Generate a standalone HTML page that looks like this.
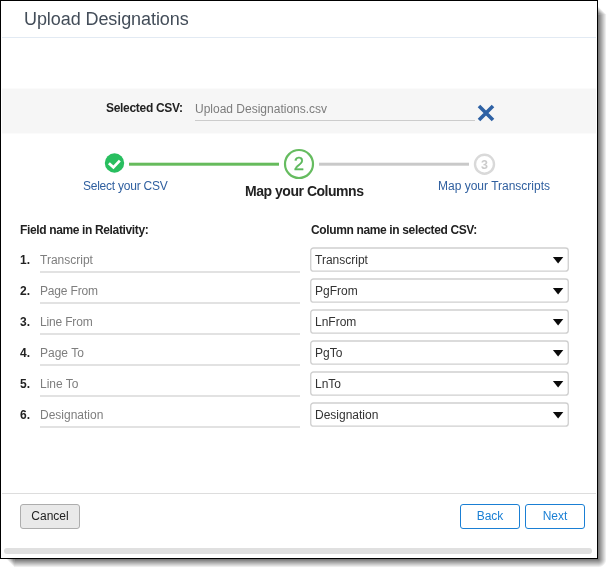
<!DOCTYPE html>
<html><head><meta charset="utf-8">
<style>
html,body{margin:0;padding:0;background:#fff;}
body{width:613px;height:574px;position:relative;overflow:hidden;font-family:"Liberation Sans",sans-serif;font-size:12px;color:#222;}
.abs{position:absolute;white-space:nowrap;}
#wrap{position:absolute;left:0;top:0;width:613px;height:574px;will-change:transform;}
#win{position:absolute;left:0;top:0;width:596px;height:557px;border:1px solid #000;background:#fff;box-sizing:content-box;}
#title{left:24px;top:8px;font-size:18px;line-height:22px;color:#434d59;letter-spacing:-0.08px;}
#hline{left:2px;top:37px;width:594px;height:1px;background:#e2eaf3;}
#band{left:2px;top:88px;width:594px;height:46px;background:linear-gradient(to bottom,#fbfbfb 0,#fbfbfb 1px,#f6f6f6 1px,#f6f6f6 45px,#fbfbfb 45px,#fbfbfb 46px);}
#sel{left:106px;top:101px;font-weight:bold;font-size:12px;line-height:14px;color:#222;letter-spacing:-0.3px;}
#fname{left:195px;top:102px;font-size:12px;line-height:14px;color:#7c7c7c;}
#funder{left:195px;top:120px;width:280px;height:1px;background:#ccc;}
.lbl{font-size:12px;line-height:14px;color:#2f5f9f;}
.hd{font-weight:bold;font-size:12px;line-height:14px;color:#222;}
.num{left:20px;font-weight:bold;font-size:12px;line-height:14px;color:#222;}
.fld{left:40px;font-size:12px;line-height:14px;color:#7e7e7e;}
.ul{left:40px;width:260px;height:2px;background:#e2e2e2;}
.sel{left:308px;width:264px;height:28px;}
.sel svg{position:absolute;left:0;top:0;}
.sel span{position:absolute;left:7px;top:7px;font-size:12px;line-height:14px;color:#333;}
.btn{top:504px;height:23px;border-radius:3px;font-size:12px;line-height:23px;text-align:center;}
</style></head><body>
<div id="wrap">
<div id="win"></div>
<svg class="abs" style="left:0;top:0" width="613" height="574" viewBox="0 0 613 574">
<defs>
<linearGradient id="gr" x1="0" y1="0" x2="1" y2="0"><stop offset="0" stop-color="#000" stop-opacity=".56"/><stop offset="1" stop-color="#000" stop-opacity="0"/></linearGradient>
<linearGradient id="gb" x1="0" y1="0" x2="0" y2="1"><stop offset="0" stop-color="#000" stop-opacity=".56"/><stop offset="1" stop-color="#000" stop-opacity="0"/></linearGradient>
<linearGradient id="gtr" x1="1" y1="0" x2="0" y2="1"><stop offset="0.5" stop-color="#000" stop-opacity="0"/><stop offset="1" stop-color="#000" stop-opacity=".56"/></linearGradient>
<linearGradient id="gbl" x1="0" y1="1" x2="1" y2="0"><stop offset="0.5" stop-color="#000" stop-opacity="0"/><stop offset="1" stop-color="#000" stop-opacity=".56"/></linearGradient>
<radialGradient id="gbr" cx="0" cy="0" r="1"><stop offset="0" stop-color="#000" stop-opacity=".56"/><stop offset="1" stop-color="#000" stop-opacity="0"/></radialGradient>
</defs>
<rect x="598" y="14.5" width="8.6" height="544.5" fill="url(#gr)"/>
<rect x="14.5" y="559" width="583.5" height="8.6" fill="url(#gb)"/>
<rect x="598" y="5.9" width="8.6" height="8.6" fill="url(#gtr)"/>
<rect x="5.9" y="559" width="8.6" height="8.6" fill="url(#gbl)"/>
<rect x="598" y="559" width="8.6" height="8.6" fill="url(#gbr)"/>
</svg>
<div class="abs" id="title">Upload Designations</div>
<div class="abs" id="hline"></div>
<div class="abs" id="band"></div>
<div class="abs" id="sel">Selected CSV:</div>
<div class="abs" id="fname">Upload Designations.csv</div>
<div class="abs" id="funder"></div>
<svg class="abs" style="left:476px;top:103px" width="20" height="20" viewBox="0 0 20 20"><path d="M3 3 L17 17 M17 3 L3 17" stroke="#2f62a5" stroke-width="3.6" fill="none"/></svg>

<!-- stepper -->
<svg class="abs" style="left:80px;top:140px" width="500" height="45" viewBox="0 0 500 45">
<circle cx="34.5" cy="23" r="9.7" fill="#28be5f"/>
<path d="M28.9 23.3 L33.4 27.4 L39.8 20.6" stroke="#fff" stroke-width="2.8" fill="none"/>
<rect x="49" y="22.7" width="150" height="3" fill="#66bb5c"/>
<circle cx="219" cy="24" r="14" fill="#fff" stroke="#66bc60" stroke-width="2.2"/>
<text x="219" y="29.9" text-anchor="middle" font-family="Liberation Sans, sans-serif" font-size="18.5" fill="#5cb85c" stroke="#5cb85c" stroke-width="0.35">2</text>
<rect x="239" y="22.7" width="150" height="3" fill="#c9c9c9"/>
<circle cx="404.5" cy="24.2" r="9.5" fill="#fff" stroke="#d9d9d9" stroke-width="2.4"/>
<text x="404.6" y="29.4" text-anchor="middle" font-family="Liberation Sans, sans-serif" font-size="12.5" font-weight="bold" fill="#cbcbcb">3</text>
</svg>
<div class="abs lbl" style="left:83px;top:179px;letter-spacing:-0.24px">Select your CSV</div>
<div class="abs" style="left:245px;top:183px;font-weight:bold;font-size:14px;line-height:16px;color:#222;letter-spacing:-0.47px">Map your Columns</div>
<div class="abs lbl" style="left:438px;top:179px">Map your Transcripts</div>

<div class="abs hd" style="left:20px;top:223px;letter-spacing:-0.36px">Field name in Relativity:</div>
<div class="abs hd" style="left:311px;top:223px;letter-spacing:-0.36px">Column name in selected CSV:</div>

<div class="abs num" style="top:253px">1.</div><div class="abs fld" style="top:253px">Transcript</div><div class="abs ul" style="top:271px"></div>
<div class="abs num" style="top:284px">2.</div><div class="abs fld" style="top:284px;letter-spacing:-0.17px">Page From</div><div class="abs ul" style="top:302px"></div>
<div class="abs num" style="top:315px">3.</div><div class="abs fld" style="top:315px;letter-spacing:-0.17px">Line From</div><div class="abs ul" style="top:333px"></div>
<div class="abs num" style="top:346px">4.</div><div class="abs fld" style="top:346px">Page To</div><div class="abs ul" style="top:364px"></div>
<div class="abs num" style="top:377px">5.</div><div class="abs fld" style="top:377px">Line To</div><div class="abs ul" style="top:395px"></div>
<div class="abs num" style="top:408px">6.</div><div class="abs fld" style="top:408px">Designation</div><div class="abs ul" style="top:426px"></div>

<div class="abs sel" style="top:246px"><svg width="264" height="28" viewBox="0 0 264 28"><rect x="2.75" y="2" width="257.5" height="23.2" rx="2.8" fill="#fff" stroke="#cfcfcf" stroke-width="1.3"/><path d="M244.9 11.1 L255.3 11.1 L250.1 17.6 Z" fill="#0a0a0a"/></svg><span>Transcript</span></div>
<div class="abs sel" style="top:277px"><svg width="264" height="28" viewBox="0 0 264 28"><rect x="2.75" y="2" width="257.5" height="23.2" rx="2.8" fill="#fff" stroke="#cfcfcf" stroke-width="1.3"/><path d="M244.9 11.1 L255.3 11.1 L250.1 17.6 Z" fill="#0a0a0a"/></svg><span>PgFrom</span></div>
<div class="abs sel" style="top:308px"><svg width="264" height="28" viewBox="0 0 264 28"><rect x="2.75" y="2" width="257.5" height="23.2" rx="2.8" fill="#fff" stroke="#cfcfcf" stroke-width="1.3"/><path d="M244.9 11.1 L255.3 11.1 L250.1 17.6 Z" fill="#0a0a0a"/></svg><span>LnFrom</span></div>
<div class="abs sel" style="top:339px"><svg width="264" height="28" viewBox="0 0 264 28"><rect x="2.75" y="2" width="257.5" height="23.2" rx="2.8" fill="#fff" stroke="#cfcfcf" stroke-width="1.3"/><path d="M244.9 11.1 L255.3 11.1 L250.1 17.6 Z" fill="#0a0a0a"/></svg><span>PgTo</span></div>
<div class="abs sel" style="top:370px"><svg width="264" height="28" viewBox="0 0 264 28"><rect x="2.75" y="2" width="257.5" height="23.2" rx="2.8" fill="#fff" stroke="#cfcfcf" stroke-width="1.3"/><path d="M244.9 11.1 L255.3 11.1 L250.1 17.6 Z" fill="#0a0a0a"/></svg><span>LnTo</span></div>
<div class="abs sel" style="top:401px"><svg width="264" height="28" viewBox="0 0 264 28"><rect x="2.75" y="2" width="257.5" height="23.2" rx="2.8" fill="#fff" stroke="#cfcfcf" stroke-width="1.3"/><path d="M244.9 11.1 L255.3 11.1 L250.1 17.6 Z" fill="#0a0a0a"/></svg><span>Designation</span></div>

<div class="abs" style="left:2px;top:493px;width:594px;height:1px;background:#ddd"></div>
<div class="abs btn" style="left:20px;width:58px;border:1px solid #adadad;background:#e9e9e9;color:#222">Cancel</div>
<div class="abs btn" style="left:460px;width:58px;border:1px solid #1a7fd4;background:#fff;color:#1a7fd4">Back</div>
<div class="abs btn" style="left:525px;width:58px;border:1px solid #1a7fd4;background:#fff;color:#1a7fd4">Next</div>
<div class="abs" style="left:4px;top:548px;width:588px;height:6px;border-radius:3px;background:#e0e0e0"></div>
</div>
</body></html>
